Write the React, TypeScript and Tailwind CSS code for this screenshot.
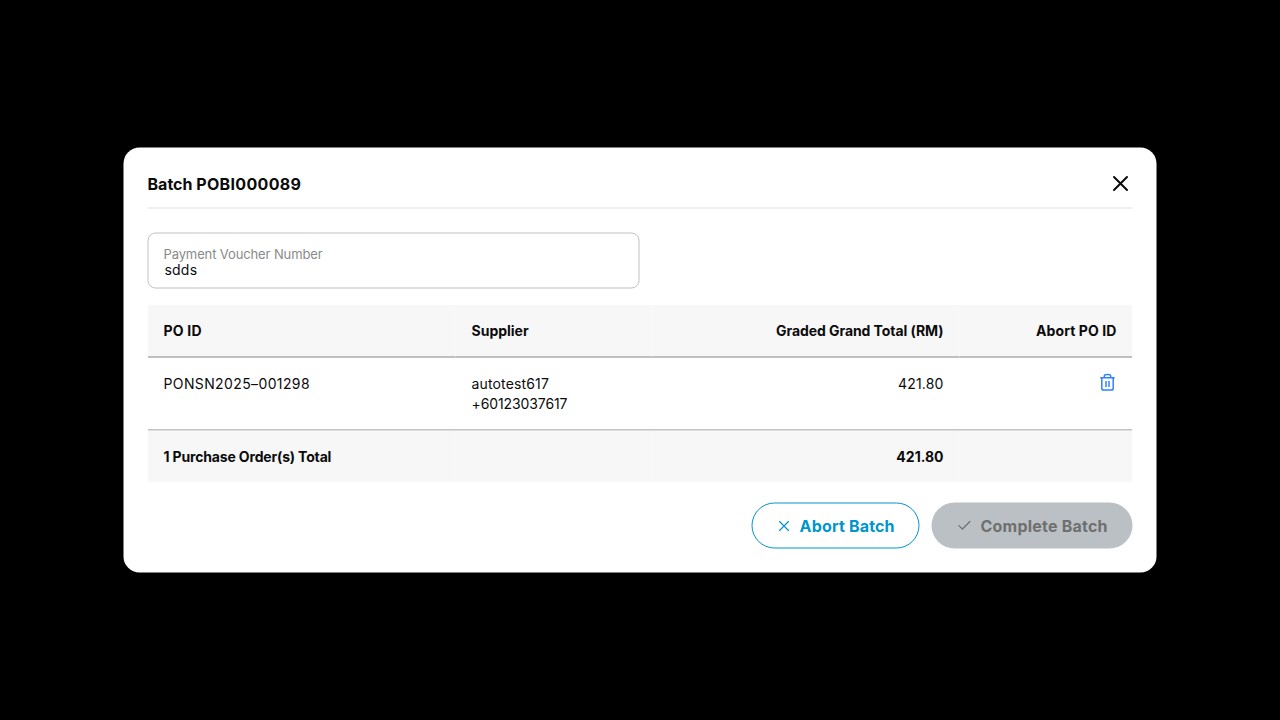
import type { ReactNode } from "react";

function CloseIcon({ className, strokeWidth = 2 }: { className?: string; strokeWidth?: number }) {
  return (
    <svg viewBox="0 0 16 16" fill="none" stroke="currentColor" strokeWidth={strokeWidth} strokeLinecap="round" className={className}>
      <path d="M1.5 1.5 14.5 14.5M14.5 1.5 1.5 14.5" />
    </svg>
  );
}

function CheckIcon() {
  return (
    <svg viewBox="0 0 14 12" fill="none" stroke="currentColor" strokeWidth={1.2} strokeLinecap="round" strokeLinejoin="round" className="h-3 w-[14px]">
      <path d="M1.4 6.1 4.9 9.500 12.400 2" />
    </svg>
  );
}

function TrashIcon() {
  return (
    <svg viewBox="0 0 16 18" fill="none" stroke="currentColor" strokeWidth={1.5} className="h-[18px] w-4">
      <path d="M.8 4.3h14.400M2.300 4.300v10.400c0 1.100.8 1.900 1.900 1.900h7.600c1.100 0 1.900-.8 1.900-1.900V4.300M4.800 4.100V3c0-1.100.8-1.900 1.900-1.900h2.600c1.100 0 1.900.8 1.900 1.900v1.100M6.500 7.500v6M9.500 7.500v6" />
    </svg>
  );
}

function Row({ children, className }: { children: ReactNode; className: string }) {
  return <div className={`grid grid-cols-[308px_197px_307px_173px] ${className}`}>{children}</div>;
}

export default function App() {
  return (
    <div className="flex h-screen w-screen items-center justify-center overflow-hidden bg-black font-[Inter,sans-serif] text-[#0b0b0c]">
      <div className="h-[426px] w-[1034px]">
        <div className="flex h-[425px] w-[1033px] translate-x-[0.5px] translate-y-[0.5px] flex-col rounded-2xl bg-white px-6 pb-6">
          <header className="flex h-[61px] items-center justify-between border-b border-[#e1e1e2] pt-3 pr-1">
            <h1 className="text-base font-bold">
              Batch <span className="tracking-[0.33px]">POBI000089</span>
            </h1>
            <button aria-label="Close">
              <CloseIcon className="size-4" />
            </button>
          </header>

          <label className="mt-6 flex h-14 w-[492px] flex-col rounded-lg border border-[#c0c0c0] px-[15px] pt-3">
            <span className="text-[13px] leading-4 tracking-[-0.12px] text-[#8a8a8a]">Payment Voucher Number</span>
            <span className="pl-px text-sm leading-4 tracking-[0.2px]">sdds</span>
          </label>

          <div className="mt-4 text-sm leading-5 [clip-path:inset(0.5px)]">
            <Row className="h-[53px] font-bold *:border-b *:border-[#888888] *:bg-[#f7f7f7] *:px-4 *:pt-4">
              <div className="tracking-[0.2px]">PO ID</div>
              <div>Supplier</div>
              <div className="text-right tracking-[-0.07px]">Graded Grand Total (RM)</div>
              <div className="text-right tracking-[0.09px]">Abort PO ID</div>
            </Row>
            <Row className="h-[73px] *:border-b *:border-[#888888] *:px-4 *:pt-4">
              <div className="tracking-[0.38px]">PONSN2025–001298</div>
              <div>
                <p className="tracking-[0.15px]">autotest617</p>
                <p className="tracking-[-0.1px]">+60123037617</p>
              </div>
              <div className="text-right tracking-[0.17px]">421.80</div>
              <div className="flex justify-end text-[#2f80ff]">
                <button aria-label="Abort PO" className="mr-px h-[18px]">
                  <TrashIcon />
                </button>
              </div>
            </Row>
            <Row className="h-[52px] font-bold *:bg-[#f7f7f7] *:px-4 *:pt-4">
              <div className="tracking-[-0.16px]">1 Purchase Order(s) Total</div>
              <div />
              <div className="text-right">421.80</div>
              <div />
            </Row>
          </div>

          <footer className="mt-5 flex justify-end gap-3 text-base font-bold">
            <button className="flex h-[46px] w-[168px] items-center rounded-full border border-[#0095cd] pl-[26px] text-[#0095cd]">
              <CloseIcon className="size-[11px]" strokeWidth={1.7} />
              <span className="ml-[10px] tracking-[0.18px]">Abort Batch</span>
            </button>
            <button className="flex h-[46px] w-[201px] items-center rounded-full bg-[#bac0c4] pl-[26px] text-[#6f6f6f]">
              <CheckIcon />
              <span className="ml-[9px] tracking-[0.22px]">Complete Batch</span>
            </button>
          </footer>
        </div>
      </div>
    </div>
  );
}
